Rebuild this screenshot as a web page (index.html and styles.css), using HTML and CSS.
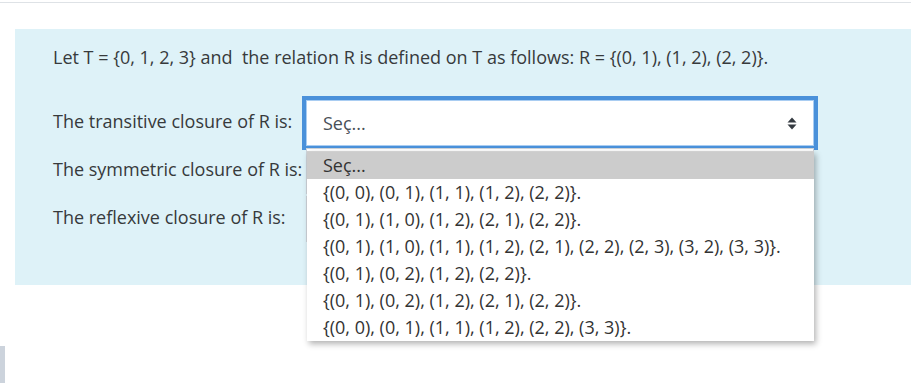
FILE: index.html
```html
<!DOCTYPE html>
<html lang="tr">
<head>
  <meta charset="UTF-8">
  <title>Matching question</title>
  <link rel="stylesheet" href="styles.css">
</head>
<body>
<!-- Top rule -->
<div class="top-rule"></div>

<!-- Question formulation -->
<div class="formulation">
  <p class="qtext">Let T = {0, 1, 2, 3} and&nbsp; the relation R is defined on T as follows: R = {(0, 1), (1, 2), (2, 2)}.</p>

  <div class="answer">
    <div class="text">The transitive closure of R is:</div>
    <div class="control">
      <div class="select focused">
        <span>Seç...</span>
        <svg class="arrows" width="10" height="13" viewBox="0 0 10 13">
          <path d="M5 0.5 L9.5 5.5 L0.5 5.5 Z" fill="#343a40"/>
          <path d="M5 12.5 L9.5 7.5 L0.5 7.5 Z" fill="#343a40"/>
        </svg>
      </div>
    </div>

    <div class="text">The symmetric closure of R is:</div>
    <div class="control">
      <div class="select"><span>Seç...</span></div>
    </div>

    <div class="text">The reflexive closure of R is:</div>
    <div class="control">
      <div class="select"><span>Seç...</span></div>
    </div>
  </div>
</div>

<!-- Open dropdown list of the first select (popup over the page) -->
<ul class="dropdown">
  <li class="active">Seç...</li>
  <li>{(0, 0), (0, 1), (1, 1), (1, 2), (2, 2)}.</li>
  <li>{(0, 1), (1, 0), (1, 2), (2, 1), (2, 2)}.</li>
  <li>{(0, 1), (1, 0), (1, 1), (1, 2), (2, 1), (2, 2), (2, 3), (3, 2), (3, 3)}.</li>
  <li>{(0, 1), (0, 2), (1, 2), (2, 2)}.</li>
  <li>{(0, 1), (0, 2), (1, 2), (2, 1), (2, 2)}.</li>
  <li>{(0, 0), (0, 1), (1, 1), (1, 2), (2, 2), (3, 3)}.</li>
</ul>

<!-- Side handle -->
<div class="side-tab"></div>
</body>
</html>
```

FILE: styles.css
```css
/* Basic reset */
body {
  margin: 0;
  padding: 0;
  font-family: "Open Sans", "Noto Sans", sans-serif;
  font-size: 18px;
  color: #373a3c;
  background: #fff;
}

.top-rule {
  margin-top: 2px;
  height: 1px;
  background-color: #dee2e6;
}

/* Question box */
.formulation {
  margin: 26px 0 0 15px;
  padding: 16px 0 42px 38px;
  background-color: #def2f8;
}
.qtext {
  margin: 0 0 30px;
  line-height: 24px;
}

/* Answer rows */
.answer {
  display: grid;
  grid-template-columns: 253px 508px;
  grid-auto-rows: 48px;
  align-items: center;
}
.answer .text {
  margin-top: -4px;
  white-space: nowrap;
}

.select {
  box-sizing: border-box;
  height: 46px;
  display: flex;
  align-items: center;
  justify-content: space-between;
  padding: 0 16px;
  background-color: #fff;
  border: 1px solid #ced4da;
  color: #495057;
}
.select.focused {
  border-color: #a9cdf2;
  box-shadow: 0 0 0 4px #4a91da;
}

/* Dropdown list */
.dropdown {
  position: absolute;
  top: 151px;
  left: 307px;
  z-index: 2;
  width: 507px;
  margin: 0;
  padding: 0;
  list-style: none;
  background-color: #fff;
  border-top: 1px solid #d0d0d0;
  box-shadow: 2px 3px 6px rgba(0, 0, 0, 0.3);
}
.dropdown li {
  height: 27px;
  line-height: 27px;
  padding-left: 16px;
  color: #333;
  white-space: nowrap;
}
.dropdown li.active {
  background-color: #cccccc;
}

.side-tab {
  position: absolute;
  left: 0;
  top: 346px;
  width: 5px;
  height: 37px;
  background-color: #ccd3dc;
}
```
